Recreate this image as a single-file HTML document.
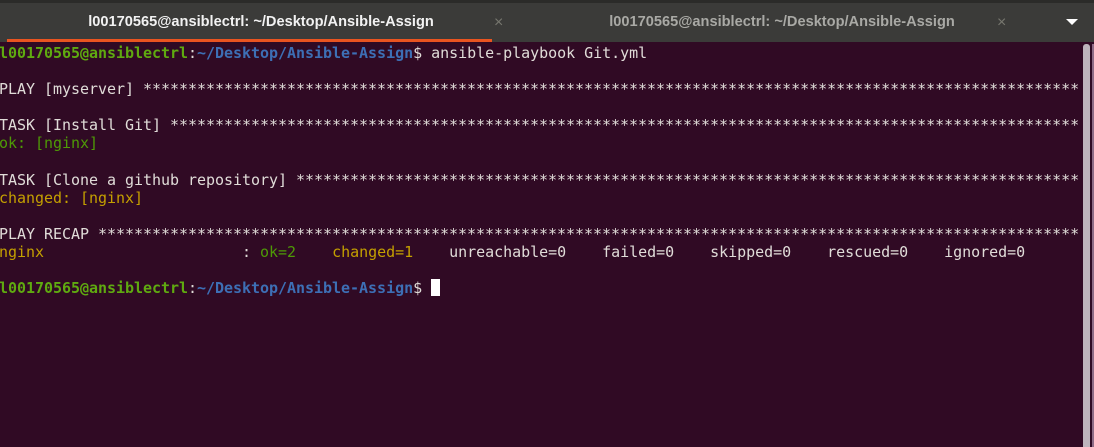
<!DOCTYPE html>
<html><head><style>
body{margin:0;width:1094px;height:447px;overflow:hidden;background:#300a24;position:relative;font-family:"Liberation Sans",sans-serif}
.bar{position:absolute;left:0;top:0;width:1094px;height:42px;background:#3b3b39;border-top:3px solid #2b2b29;box-sizing:border-box}
.tab{position:absolute;top:0;height:39px;line-height:39px;font-size:14.6px;font-weight:bold;text-align:center}
.x{position:absolute;top:0;line-height:39px;font-size:16px;color:#77776f}
.ul{position:absolute;left:7px;top:39px;width:485px;height:3px;background:#e95420}
pre{position:absolute;left:-1px;top:44px;margin:0;font-family:"DejaVu Sans Mono","Liberation Mono",monospace;font-size:15px;line-height:18.1px;color:#e0dcd8;letter-spacing:-0.03px}
.g{color:#4e9a06}.gb{color:#5faa10;font-weight:bold}.b{color:#3d6fb5;font-weight:bold}.y{color:#c4a000}
.cur{display:inline-block;width:9px;height:17px;background:#fff;vertical-align:-3px}
.sb{position:absolute;left:1083px;top:44px;width:7px;height:403px;background:#bdb4bc;border-radius:3px 3px 0 0}
.edge{position:absolute;left:1092px;top:44px;width:2px;height:403px;background:#8e6b86}
</style></head><body>
<div class="bar">
<div class="tab" style="left:11px;width:500px;color:#f2f2f2">l00170565@ansiblectrl: ~/Desktop/Ansible-Assign</div>
<div class="x" style="left:494px">×</div>
<div class="tab" style="left:532px;width:500px;color:#a9a9a5">l00170565@ansiblectrl: ~/Desktop/Ansible-Assign</div>
<div class="x" style="left:997px">×</div>
<div style="position:absolute;left:1066px;top:16px;width:0;height:0;border-left:6px solid transparent;border-right:6px solid transparent;border-top:6px solid #fff"></div>
</div>
<div class="ul"></div>
<pre><span class="gb">l00170565@ansiblectrl</span>:<span class="b">~/Desktop/Ansible-Assign</span>$ ansible-playbook Git.yml

PLAY [myserver] ********************************************************************************************************

TASK [Install Git] *****************************************************************************************************
<span class="g">ok: [nginx]</span>

TASK [Clone a github repository] ***************************************************************************************
<span class="y">changed: [nginx]</span>

PLAY RECAP *************************************************************************************************************
<span class="y">nginx</span>                      : <span class="g">ok=2</span>    <span class="y">changed=1</span>    unreachable=0    failed=0    skipped=0    rescued=0    ignored=0   

<span class="gb">l00170565@ansiblectrl</span>:<span class="b">~/Desktop/Ansible-Assign</span>$ <span class="cur"></span></pre>
<div class="sb"></div><div class="edge"></div>
</body></html>
